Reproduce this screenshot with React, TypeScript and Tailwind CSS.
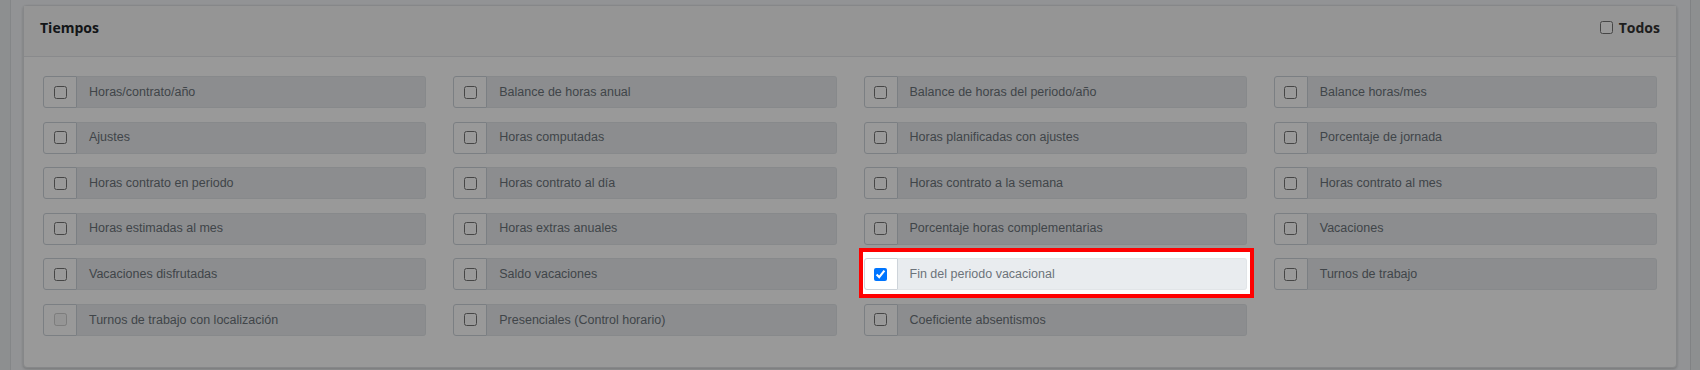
import React from 'react';

interface Campo {
  label: string;
  checked?: boolean;
  disabled?: boolean;
  highlight?: boolean;
}

const campos: Campo[] = [
  { label: 'Horas/contrato/año' },
  { label: 'Balance de horas anual' },
  { label: 'Balance de horas del periodo/año' },
  { label: 'Balance horas/mes' },
  { label: 'Ajustes' },
  { label: 'Horas computadas' },
  { label: 'Horas planificadas con ajustes' },
  { label: 'Porcentaje de jornada' },
  { label: 'Horas contrato en periodo' },
  { label: 'Horas contrato al día' },
  { label: 'Horas contrato a la semana' },
  { label: 'Horas contrato al mes' },
  { label: 'Horas estimadas al mes' },
  { label: 'Horas extras anuales' },
  { label: 'Porcentaje horas complementarias' },
  { label: 'Vacaciones' },
  { label: 'Vacaciones disfrutadas' },
  { label: 'Saldo vacaciones' },
  { label: 'Fin del periodo vacacional', checked: true, highlight: true },
  { label: 'Turnos de trabajo' },
  { label: 'Turnos de trabajo con localización', disabled: true },
  { label: 'Presenciales (Control horario)' },
  { label: 'Coeficiente absentismos' }
];

const CampoInput: React.FC<{ campo: Campo }> = ({ campo }) => {
  const group = (
    <div className="relative flex h-8 w-full">
      <div className="flex w-[34px] shrink-0 items-center justify-center rounded-l-[3px] border border-[#ced4da] bg-white">
        <input
          type="checkbox"
          defaultChecked={campo.checked}
          disabled={campo.disabled}
          className="h-[13px] w-[13px]"
        />
      </div>
      <div className="flex flex-1 items-center rounded-r-[3px] border border-l-0 border-[#e2e5e8] bg-[#e9ecef] pl-[12px] font-['Liberation_Sans',Arial,sans-serif] text-[12.5px] text-[#6c737a]">
        {campo.label}
      </div>
    </div>
  );

  if (!campo.highlight) return group;

  return (
    <div className="relative z-20">
      {/* tour highlight */}
      <div className="absolute -top-[10px] -bottom-[8px] -left-[5px] -right-[7px] border-4 border-[#ff0000] bg-white" />
      {group}
    </div>
  );
};

const App: React.FC = () => {
  return (
    <div className="relative flex h-[370px] w-full overflow-hidden bg-[#eceef1] font-['Roboto',sans-serif]">
      <div className="w-[11px] shrink-0 border-r border-[#dcdfe3] bg-[#eceef1]" />
      <div className="flex-1 bg-[#f4f6f9] pt-[5px] pl-[12px] pr-[13px]">
        <div className="rounded-[4px] border border-[#dfe1e4] bg-white shadow-[0_1px_3px_rgba(0,0,0,0.2)]">
          {/* Header */}
          <div className="flex h-[51px] items-start justify-between border-b border-[#e5e7ea] bg-[#f8f8f8] px-4 pt-[11px]">
            <h3 className="font-['Open_Sans',sans-serif] text-[14px] font-bold text-[#212529]">Tiempos</h3>
            <label className="flex items-center gap-[6px] font-['Open_Sans',sans-serif] text-[14px] font-bold text-[#333]">
              <input type="checkbox" className="h-[13px] w-[13px]" />
              Todos
            </label>
          </div>

          {/* Campos */}
          <div className="grid grid-cols-4 gap-x-[27px] gap-y-[13.6px] px-[19px] pt-[19px] pb-[31px]">
            {campos.map(c => (
              <CampoInput key={c.label} campo={c} />
            ))}
          </div>
        </div>
      </div>
      <div className="w-[10px] shrink-0 border-l border-[#d6d9dc] bg-[#eceef1]" />

      {/* Overlay */}
      <div className="pointer-events-none absolute inset-0 z-10 bg-black/40" />
    </div>
  );
};

export default App;
